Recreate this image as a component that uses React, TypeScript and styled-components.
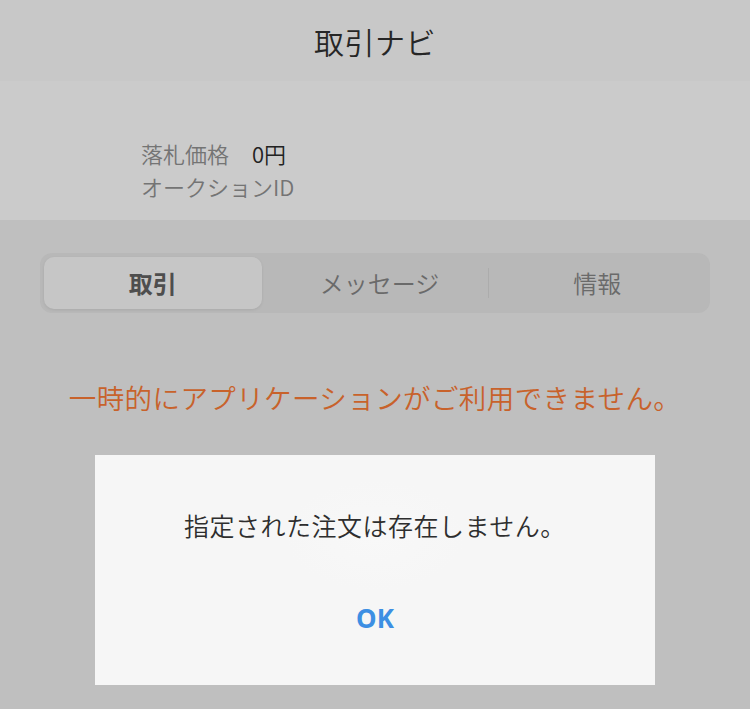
import styled, { createGlobalStyle } from 'styled-components'

const GlobalStyle = createGlobalStyle`
    html, body {
        margin: 0;
        padding: 0;
        background: #bfbfbf;
    }
    body {
        font-family: "Noto Sans CJK JP", "Noto Sans", sans-serif;
        font-weight: 350;
    }
    * {
        box-sizing: border-box;
    }
`

const tabs = ['取引', 'メッセージ', '情報']

const App = () => {
    return (
        <Page>
            <GlobalStyle />
            <Header>
                <Title>取引ナビ</Title>
            </Header>
            <InfoPanel>
                <InfoRow>
                    <Label>落札価格</Label>
                    <Value>0円</Value>
                </InfoRow>
                <InfoRow>
                    <Label>オークションID</Label>
                </InfoRow>
            </InfoPanel>
            <Segment>
                {tabs.map((tab, i) => (
                    <Tab key={tab} active={i === 0} divider={i === 2}>
                        {tab}
                    </Tab>
                ))}
            </Segment>
            <ErrorText>一時的にアプリケーションがご利用できません。</ErrorText>

            <Dialog>
                <DialogMessage>指定された注文は存在しません。</DialogMessage>
                <OkButton>OK</OkButton>
            </Dialog>
        </Page>
    )
}

const Page = styled.div`
    position: relative;
    width: 750px;
    height: 709px;
    background: #bfbfbf;
    display: flex;
    flex-direction: column;
    overflow: hidden;
`

const Header = styled.header`
    height: 81px;
    background: #c8c8c8;
    display: flex;
    justify-content: center;
    align-items: center;
`

const Title = styled.h1`
    margin: 0;
    font-size: 30px;
    font-weight: 350;
    color: #262626;
    letter-spacing: 0.5px;
`

const InfoPanel = styled.section`
    height: 139px;
    background: #cbcbcb;
    display: flex;
    flex-direction: column;
    justify-content: flex-end;
    padding: 0 0 17px 141px;
`

const InfoRow = styled.div`
    display: flex;
    align-items: center;
    height: 33px;
    font-size: 22px;
    line-height: 33px;
`

const Label = styled.span`
    color: #747474;
`

const Value = styled.span`
    color: #222222;
    margin-left: 23px;
`

const Segment = styled.nav`
    margin: 33px 40px 0;
    height: 60px;
    border-radius: 12px;
    background: #b8b8b8;
    padding: 4px;
    display: flex;
`

const Tab = styled.div<{ active?: boolean; divider?: boolean }>`
    flex: 1 1 0;
    position: relative;
    display: flex;
    justify-content: center;
    align-items: center;
    padding-bottom: 2px;
    margin-right: ${(p) => (p.active ? '9px' : '0')};
    border-radius: 10px;
    font-size: 24px;
    font-weight: ${(p) => (p.active ? 700 : 350)};
    color: ${(p) => (p.active ? '#4e4e4e' : '#6a6a6a')};
    background: ${(p) => (p.active ? '#c6c6c6' : 'transparent')};
    box-shadow: ${(p) => (p.active ? '0 1px 3px rgba(0,0,0,0.08)' : 'none')};

    ${(p) =>
        p.divider &&
        `
        &::before {
            content: '';
            position: absolute;
            left: 0;
            top: 11px;
            bottom: 11px;
            width: 1px;
            background: #acacac;
        }
    `}
`

const ErrorText = styled.p`
    margin: 64px 0 0;
    text-align: center;
    font-size: 27.5px;
    color: #c8622b;
    letter-spacing: 0.4px;
`

const Dialog = styled.div`
    position: absolute;
    left: 95px;
    top: 455px;
    width: 560px;
    height: 230px;
    background: radial-gradient(ellipse 90px 55px at 50% 35%, #f8f8f8, #f6f6f6);
    display: flex;
    flex-direction: column;
    align-items: center;
`

const DialogMessage = styled.p`
    margin: 52px 0 0;
    font-size: 25px;
    color: #2e2e2e;
    letter-spacing: 0.5px;
`

const OkButton = styled.button`
    margin-top: 57px;
    border: none;
    background: none;
    padding: 0;
    font-family: "Noto Sans", "Liberation Sans", sans-serif;
    font-size: 26px;
    font-weight: 700;
    color: #3d8fe3;
`

export default App
